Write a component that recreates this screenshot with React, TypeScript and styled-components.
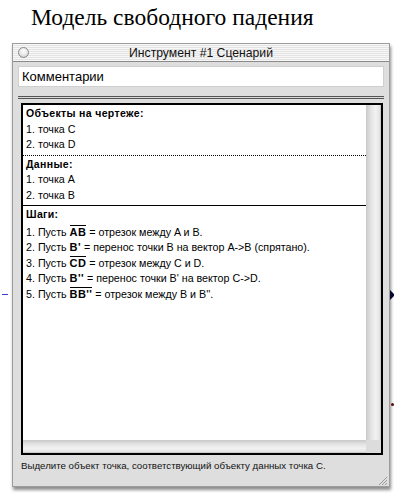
import styled, { createGlobalStyle } from 'styled-components'

const GlobalStyle = createGlobalStyle`
  html, body {
    margin: 0;
    padding: 0;
    background: #ffffff;
  }
  * {
    box-sizing: border-box;
  }
`

const Page = styled.div`
  width: 394px;
  height: 493px;
  overflow: hidden;
  padding-top: 2px;
`

const Heading = styled.h1`
  margin: 0 0 0 31px;
  font-family: "Liberation Serif", "Times New Roman", serif;
  font-weight: normal;
  font-size: 23.5px;
  line-height: 31px;
  color: #000;
`

const Stage = styled.div`
  position: relative;
  margin-top: 10px;
`

const Window = styled.div`
  margin-left: 12px;
  width: 378px;
  height: 444px;
  background: #dedede;
  border: 1px solid #9c9c9c;
  box-shadow: 1px 3px 3px rgba(0, 0, 0, 0.45);
  display: flex;
  flex-direction: column;
`

const TitleBar = styled.div`
  height: 18px;
  display: grid;
  grid-template-columns: 20px 1fr 20px;
  align-items: center;
  background: repeating-linear-gradient(to bottom, #f7f7f7 0 1px, #e4e4e4 1px 2px);
  border-bottom: 1px solid #8a8a8a;
  font-family: "Liberation Sans", Arial, sans-serif;
  font-size: 12.2px;
  color: #111;
`

const CloseDot = styled.span`
  width: 11px;
  height: 11px;
  margin-left: 5px;
  border-radius: 50%;
  border: 1px solid #8a8a8a;
  background: radial-gradient(circle at 50% 35%, #ffffff 0%, #e6e6e6 55%, #bdbdbd 100%);
`

const TitleText = styled.span`
  text-align: center;
  padding-top: 1px;
`

const Body = styled.div`
  flex: 1;
  display: flex;
  flex-direction: column;
  padding: 0 5px;
`

const CommentBox = styled.div`
  margin-top: 4px;
  height: 21px;
  background: #fff;
  border: 1px solid #cfcfcf;
  padding-left: 3px;
  font-family: "Liberation Sans", Arial, sans-serif;
  font-size: 13px;
  line-height: 19px;
  color: #000;
`

const DoubleRule = styled.div`
  margin-top: 9px;
  height: 3px;
  border-top: 1px solid #555;
  border-bottom: 1px solid #555;
  background: #d8d8d8;
`

const MainBox = styled.div`
  margin: 4px 1px 0 3px;
  height: 352px;
  border: 2px solid #000;
  display: grid;
  grid-template-columns: 1fr 15px;
  grid-template-rows: 1fr 13px;
  background: #fff;
`

const Content = styled.div`
  font-family: "Liberation Sans", Arial, sans-serif;
  font-size: 10.7px;
  line-height: 15.5px;
  color: #000;
`

const Section = styled.div<{ $rule?: 'dotted' | 'solid' }>`
  padding: ${p => (p.$rule ? '1px 0 2px 3px' : '1px 0 0 3px')};
  border-bottom: ${p => (p.$rule ? `1px ${p.$rule} #000` : 'none')};
`

const SectionHead = styled.div`
  font-weight: bold;
  font-size: 10.5px;
  letter-spacing: 0.35px;
`

const Line = styled.div``

const Steps = styled.div`
  margin-top: 2px;
`

const Strong = styled.b`
  font-size: 11px;
  letter-spacing: 0.4px;
`

const Over = styled.b`
  display: inline-block;
  font-size: 11px;
  letter-spacing: 0.4px;
  line-height: 10px;
  border-top: 1px solid #000;
  padding-top: 1px;
`

const VScroll = styled.div`
  background: linear-gradient(to right, #c8c8c8 0%, #e2e2e2 30%, #f2f2f2 65%, #e4e4e4 90%, #bdbdbd 100%);
`

const HScroll = styled.div`
  background: linear-gradient(to bottom, #c8c8c8 0%, #e2e2e2 30%, #f2f2f2 65%, #e4e4e4 90%, #bdbdbd 100%);
`

const Corner = styled.div`
  background: #dcdcdc;
`

const Footer = styled.div`
  flex: 1;
  display: flex;
  flex-direction: column;
`

const Status = styled.div`
  margin: 4px 0 0 3px;
  font-family: "Liberation Sans", Arial, sans-serif;
  font-size: 9.7px;
  line-height: 13px;
  color: #111;
`

const Grip = styled.svg`
  margin: auto -4px 0 auto;
  display: block;
`

const BlueMark = styled.div`
  position: absolute;
  left: 2px;
  top: 251px;
  width: 6px;
  height: 1px;
  background: #3a3ad0;
`

const Pointer = styled.div`
  position: absolute;
  left: 390px;
  top: 247px;
  width: 0;
  height: 0;
  border-top: 5px solid transparent;
  border-bottom: 5px solid transparent;
  border-left: 5px solid #0a0a30;
`

const Dot = styled.div`
  position: absolute;
  left: 391px;
  top: 360px;
  width: 3px;
  height: 3px;
  border-radius: 50%;
  background: #5a0a0a;
`

export default function App() {
  return (
    <Page>
      <GlobalStyle />
      <Heading>Модель свободного падения</Heading>
      <Stage>
        <BlueMark />
        <Pointer />
        <Dot />
        <Window>
          <TitleBar>
            <CloseDot />
            <TitleText>Инструмент #1 Сценарий</TitleText>
            <span />
          </TitleBar>
          <Body>
            <CommentBox>Комментарии</CommentBox>
            <DoubleRule />
            <MainBox>
              <Content>
                <Section $rule="dotted">
                  <SectionHead>Объекты на чертеже:</SectionHead>
                  <Line>1. точка C</Line>
                  <Line>2. точка D</Line>
                </Section>
                <Section $rule="solid">
                  <SectionHead>Данные:</SectionHead>
                  <Line>1. точка A</Line>
                  <Line>2. точка B</Line>
                </Section>
                <Section>
                  <SectionHead>Шаги:</SectionHead>
                  <Steps>
                    <Line>1. Пусть <Over>AB</Over> = отрезок между A и B.</Line>
                    <Line>2. Пусть <Strong>B'</Strong> = перенос точки B на вектор A-&gt;B (спрятано).</Line>
                    <Line>3. Пусть <Over>CD</Over> = отрезок между C и D.</Line>
                    <Line>4. Пусть <Strong>B''</Strong> = перенос точки B' на вектор C-&gt;D.</Line>
                    <Line>5. Пусть <Over>BB''</Over> = отрезок между B и B''.</Line>
                  </Steps>
                </Section>
              </Content>
              <VScroll />
              <HScroll />
              <Corner />
            </MainBox>
            <Footer>
              <Status>Выделите объект точка, соответствующий объекту данных точка C.</Status>
              <Grip width="10" height="10" viewBox="0 0 10 10">
                <path d="M9 1 L1 9 M9 4 L4 9 M9 7 L7 9" stroke="#9a9a9a" strokeWidth="1" />
              </Grip>
            </Footer>
          </Body>
        </Window>
      </Stage>
    </Page>
  )
}
